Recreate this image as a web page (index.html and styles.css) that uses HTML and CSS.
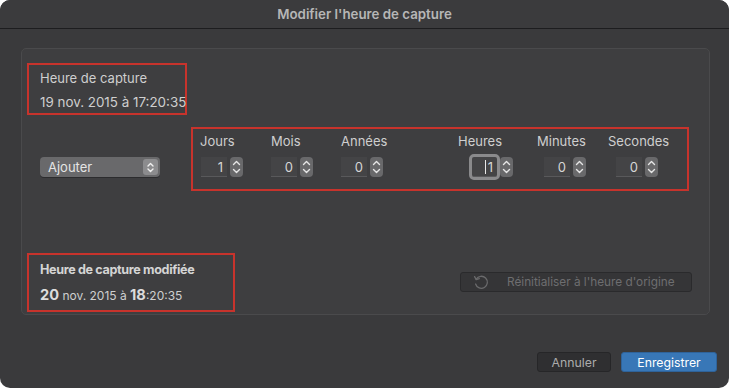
FILE: index.html
```html
<!DOCTYPE html>
<html lang="fr">
<head>
    <meta charset="UTF-8">
    <meta name="viewport" content="width=device-width, initial-scale=1.0">
    <title>Modifier l'heure de capture</title>
    <link rel="stylesheet" href="styles.css">
</head>
<body>

    <div class="window">
        <!-- Title Bar -->
        <div class="titlebar">Modifier l'heure de capture</div>

        <div class="content">
            <div class="panel">
                <div class="panel-top">
                    <!-- Original capture time -->
                    <div class="mark capture-orig">
                        <div class="info-label">Heure de capture</div>
                        <div class="info-value">19 nov. 2015 à 17:20:35</div>
                    </div>

                    <div class="adjust-row">
                        <div class="select">
                            <span>Ajouter</span>
                            <span class="select-arrows">
                                <svg width="13" height="13" viewBox="0 0 13 13"><path d="M4 5 L6.5 2.5 L9 5 M4 8 L6.5 10.5 L9 8" fill="none" stroke="#f0f0f0" stroke-width="1.4" stroke-linecap="round" stroke-linejoin="round"/></svg>
                            </span>
                        </div>

                        <!-- Offset fields -->
                        <div class="mark offsets">
                            <div class="field-col col-days">
                                <span class="field-label">Jours</span>
                                <div class="stepper-field">
                                    <span class="num">1</span>
                                    <span class="stepper"><svg width="13" height="20" viewBox="0 0 13 20"><path d="M3.5 7.5 L6.5 4.5 L9.5 7.5 M3.5 12.5 L6.5 15.5 L9.5 12.5" fill="none" stroke="#e6e6e6" stroke-width="1.4" stroke-linecap="round" stroke-linejoin="round"/></svg></span>
                                </div>
                            </div>
                            <div class="field-col col-months">
                                <span class="field-label">Mois</span>
                                <div class="stepper-field">
                                    <span class="num">0</span>
                                    <span class="stepper"><svg width="13" height="20" viewBox="0 0 13 20"><path d="M3.5 7.5 L6.5 4.5 L9.5 7.5 M3.5 12.5 L6.5 15.5 L9.5 12.5" fill="none" stroke="#e6e6e6" stroke-width="1.4" stroke-linecap="round" stroke-linejoin="round"/></svg></span>
                                </div>
                            </div>
                            <div class="field-col col-years">
                                <span class="field-label">Années</span>
                                <div class="stepper-field">
                                    <span class="num">0</span>
                                    <span class="stepper"><svg width="13" height="20" viewBox="0 0 13 20"><path d="M3.5 7.5 L6.5 4.5 L9.5 7.5 M3.5 12.5 L6.5 15.5 L9.5 12.5" fill="none" stroke="#e6e6e6" stroke-width="1.4" stroke-linecap="round" stroke-linejoin="round"/></svg></span>
                                </div>
                            </div>
                            <div class="field-col col-hours">
                                <span class="field-label">Heures</span>
                                <div class="stepper-field">
                                    <span class="num focused"><span class="caret"></span>1</span>
                                    <span class="stepper"><svg width="13" height="20" viewBox="0 0 13 20"><path d="M3.5 7.5 L6.5 4.5 L9.5 7.5 M3.5 12.5 L6.5 15.5 L9.5 12.5" fill="none" stroke="#e6e6e6" stroke-width="1.4" stroke-linecap="round" stroke-linejoin="round"/></svg></span>
                                </div>
                            </div>
                            <div class="field-col col-minutes">
                                <span class="field-label">Minutes</span>
                                <div class="stepper-field">
                                    <span class="num">0</span>
                                    <span class="stepper"><svg width="13" height="20" viewBox="0 0 13 20"><path d="M3.5 7.5 L6.5 4.5 L9.5 7.5 M3.5 12.5 L6.5 15.5 L9.5 12.5" fill="none" stroke="#e6e6e6" stroke-width="1.4" stroke-linecap="round" stroke-linejoin="round"/></svg></span>
                                </div>
                            </div>
                            <div class="field-col col-seconds">
                                <span class="field-label">Secondes</span>
                                <div class="stepper-field">
                                    <span class="num">0</span>
                                    <span class="stepper"><svg width="13" height="20" viewBox="0 0 13 20"><path d="M3.5 7.5 L6.5 4.5 L9.5 7.5 M3.5 12.5 L6.5 15.5 L9.5 12.5" fill="none" stroke="#e6e6e6" stroke-width="1.4" stroke-linecap="round" stroke-linejoin="round"/></svg></span>
                                </div>
                            </div>
                        </div>
                    </div>
                </div>

                <div class="panel-bottom">
                    <!-- Modified capture time -->
                    <div class="mark capture-new">
                        <div class="info-label strong">Heure de capture modifiée</div>
                        <div class="info-value"><b>20</b> nov. 2015 à <b>18</b>:20:35</div>
                    </div>

                    <button class="reset-btn">
                        <svg width="16" height="16" viewBox="0 0 16 16"><path d="M3.2 5.2 A6 6 0 1 1 2.6 10" fill="none" stroke="#6a6a6c" stroke-width="1.3" stroke-linecap="round"/><path d="M1.6 2.6 L3.2 5.6 L6.3 4.6" fill="none" stroke="#6a6a6c" stroke-width="1.3" stroke-linecap="round" stroke-linejoin="round"/></svg>
                        <span>Réinitialiser à l'heure d'origine</span>
                    </button>
                </div>
            </div>
        </div>

        <!-- Dialog Buttons -->
        <div class="footer">
            <button class="btn">Annuler</button>
            <button class="btn primary">Enregistrer</button>
        </div>
    </div>

</body>
</html>
```

FILE: styles.css
```css
/* Global Styles */
body, html {
    margin: 0;
    padding: 0;
    background: #ffffff;
    font-family: "Inter", "Liberation Sans", sans-serif;
    font-size: 13px;
    color: #cfcfcf;
}

/* Dialog Window */
.window {
    width: 729px;
    height: 388px;
    background: #3a3a3c;
    border-radius: 10px;
    display: flex;
    flex-direction: column;
    overflow: hidden;
}

.titlebar {
    height: 28px;
    line-height: 28px;
    text-align: center;
    font-weight: 600;
    font-size: 13.3px;
    color: #b6b6b6;
    background: #3b3b3d;
    border-bottom: 1px solid #1d1d1f;
}

.content {
    padding: 19px 19px 0 21px;
}

/* Grouped Box */
.panel {
    height: 267px;
    box-sizing: border-box;
    background: #3e3e40;
    border: 1px solid #4a4a4c;
    border-radius: 5px;
    display: flex;
    flex-direction: column;
}

.panel-top {
    height: 196px;
    padding-top: 14px;
    box-sizing: border-box;
}

.panel-bottom {
    flex: 1;
    display: flex;
    align-items: flex-start;
    justify-content: space-between;
    padding: 8px 17px 0 5px;
}

/* Red annotation frames */
.mark {
    border: 2px solid #c7332c;
    box-sizing: border-box;
}

.capture-orig {
    width: 160px;
    height: 52px;
    margin-left: 5px;
    padding: 5px 0 0 11px;
}

.capture-new {
    width: 208px;
    height: 59px;
    padding: 7px 0 0 11px;
}

.info-label, .info-value {
    line-height: 16px;
    white-space: nowrap;
}

.capture-orig .info-value {
    margin-top: 8px;
    font-size: 13.4px;
}

.capture-new .info-value {
    margin-top: 9px;
    font-size: 12px;
}

.info-label.strong {
    font-weight: 700;
    font-size: 12.6px;
    letter-spacing: -0.35px;
    color: #d4d4d4;
}

.info-value b {
    font-size: 14.6px;
    font-weight: 700;
    color: #dcdcdc;
}

/* Add / Subtract row */
.adjust-row {
    display: flex;
    align-items: flex-start;
    margin-top: 12px;
}

.select {
    width: 120px;
    height: 20px;
    margin: 30px 31px 0 18px;
    box-sizing: border-box;
    background: #69696b;
    border-radius: 4px;
    display: flex;
    align-items: center;
    justify-content: space-between;
    padding: 0 2px 0 8px;
    color: #e4e4e4;
    font-size: 13px;
    box-shadow: 0 1px 0 #2c2c2e;
}

.select-arrows {
    width: 15px;
    height: 16px;
    background: #8c8c8e;
    border-radius: 3px;
    display: flex;
    align-items: center;
    justify-content: center;
}

.offsets {
    width: 498px;
    height: 64px;
    display: flex;
    padding: 4px 0 0 7px;
}

.field-col {
    display: flex;
    flex-direction: column;
    align-items: flex-start;
}

.field-label {
    line-height: 16px;
    font-size: 13px;
    margin-bottom: 8px;
    white-space: nowrap;
}

.col-days { width: 71px; }
.col-months { width: 70px; }
.col-years { width: 117px; }
.col-hours { width: 79px; }
.col-minutes { width: 71px; }

.col-days .stepper-field { margin-left: 1px; }
.col-hours .stepper-field { margin-left: 14px; }
.col-minutes .stepper-field { margin-left: 7px; }
.col-seconds .stepper-field { margin-left: 8px; }

.stepper-field {
    display: flex;
    align-items: center;
    gap: 3px;
}

.num {
    width: 26px;
    height: 20px;
    box-sizing: border-box;
    background: #444446;
    border-bottom: 1px solid #59595b;
    text-align: right;
    padding-right: 4px;
    line-height: 20px;
    font-size: 13px;
    color: #d6d6d6;
    position: relative;
}

.num.focused {
    width: 25px;
    outline: 3px solid #8a8a8c;
    border-radius: 2px;
}

.caret {
    position: absolute;
    right: 11px;
    top: 3px;
    width: 1px;
    height: 14px;
    background: #e8e8e8;
}

.stepper {
    width: 13px;
    height: 20px;
    background: #69696b;
    border-radius: 4px;
    display: flex;
}

/* Reset button */
.reset-btn {
    width: 232px;
    height: 20px;
    margin-top: 19px;
    background: #353537;
    border: 1px solid #2a2a2c;
    border-radius: 3px;
    display: flex;
    align-items: center;
    padding: 0 0 0 12px;
    gap: 18px;
    font-family: inherit;
    font-size: 11.8px;
    color: #6e6e70;
}

/* Footer buttons */
.footer {
    flex: 1;
    display: flex;
    justify-content: flex-end;
    align-items: flex-end;
    gap: 10px;
    padding: 0 12px 16px 0;
}

.btn {
    height: 20px;
    width: 74px;
    background: #2f2f31;
    border: 1px solid #262628;
    border-radius: 3px;
    font-family: inherit;
    font-size: 12.3px;
    color: #acacac;
    padding: 0;
}

.btn.primary {
    width: 96px;
    background: #3877b7;
    border-color: #2f639a;
    color: #ffffff;
}
```
